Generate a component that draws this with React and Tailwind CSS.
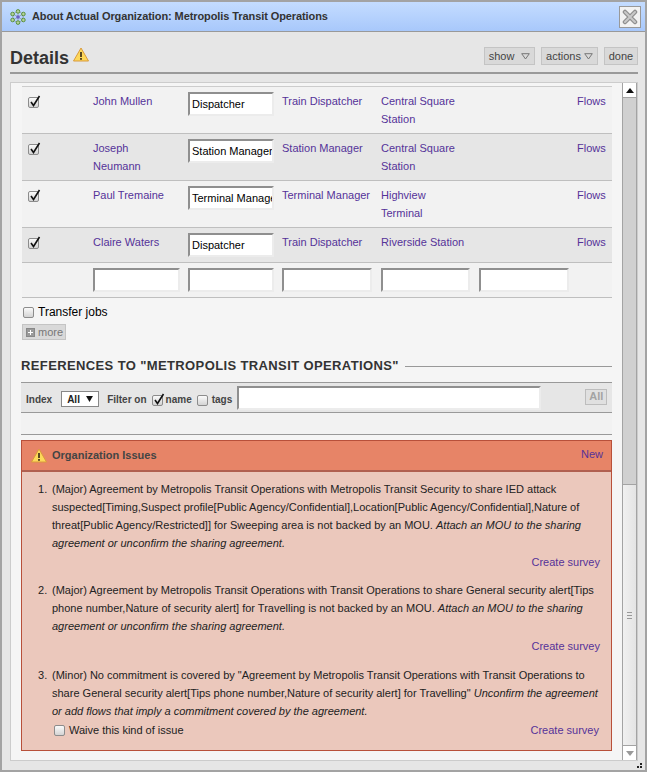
import React from "react";

const link = "text-[#553399]";

const rows = [
    { name: ["John Mullen"], job: "Dispatcher", role: "Train Dispatcher", place: ["Central Square", "Station"], h: "h-[47px]", bg: "bg-[#f2f2f2]" },
    { name: ["Joseph", "Neumann"], job: "Station Manager", role: "Station Manager", place: ["Central Square", "Station"], h: "h-[47px]", bg: "bg-[#e6e6e6]" },
    { name: ["Paul Tremaine"], job: "Terminal Manager", role: "Terminal Manager", place: ["Highview", "Terminal"], h: "h-[47px]", bg: "bg-[#f2f2f2]" },
    { name: ["Claire Waters"], job: "Dispatcher", role: "Train Dispatcher", place: ["Riverside Station"], h: "h-[35px]", bg: "bg-[#e6e6e6]" },
];

const Check = ({ checked, className = "" }) => (
    <span className={`relative inline-block w-[11px] h-[11px] shrink-0 rounded-[2px] border border-[#8c8c8c] bg-gradient-to-b from-[#fafafa] to-[#d4d4d4] ${className}`}>
        {checked && (
            <svg viewBox="0 0 14 14" className="absolute left-[-1px] top-[-4px] w-[14px] h-[14px]">
                <path d="M3 8 L5.5 11.5 L11.5 2" fill="none" stroke="#111" strokeWidth="1.6" />
            </svg>
        )}
    </span>
);

const Warn = ({ className = "" }) => (
    <svg viewBox="0 0 16 15" className={className}>
        <path d="M8 1 L15.5 14 H0.5 Z" fill="#fdd85a" stroke="#d99a3c" strokeWidth="1" strokeLinejoin="round" />
        <rect x="7.1" y="5" width="1.8" height="5" fill="#4a3a1a" />
        <rect x="7.1" y="11" width="1.8" height="1.8" fill="#4a3a1a" />
    </svg>
);

const OrgIcon = () => (
    <svg viewBox="0 0 16 16" className="w-4 h-4 shrink-0">
        <g fill="none" stroke="#8f9bb0" strokeWidth="0.8">
            <path d="M8 2 L13 5 L13 11 L8 14 L3 11 L3 5 Z" />
            <path d="M8 2 L8 14 M3 5 L13 11 M13 5 L3 11" />
        </g>
        <g fill="#b5d19a" stroke="#4f8a2f" strokeWidth="0.9">
            <circle cx="8" cy="2.4" r="1.8" />
            <circle cx="13.4" cy="5" r="1.8" />
            <circle cx="13.4" cy="11" r="1.8" />
            <circle cx="8" cy="13.6" r="1.8" />
            <circle cx="2.6" cy="11" r="1.8" />
            <circle cx="2.6" cy="5" r="1.8" />
        </g>
        <circle cx="8" cy="8" r="1.8" fill="#6b62c4" />
    </svg>
);

const Caret = () => (
    <svg viewBox="0 0 9 7" className="w-[9px] h-[7px]">
        <path d="M0.7 0.7 H8.3 L4.5 6 Z" fill="none" stroke="#777" strokeWidth="1" />
    </svg>
);

const FieldBox = ({ children, className = "" }) => (
    <div className={`h-[24px] overflow-hidden whitespace-nowrap bg-white border-2 border-t-[#8f8f8f] border-l-[#8f8f8f] border-r-[#ececec] border-b-[#ececec] pl-[2px] text-[11px] leading-[21px] text-black ${className}`}>
        {children}
    </div>
);

const Issue = ({ num, children, survey = true, surveyGap = "mt-[1px]", className = "" }) => (
    <li className={`flex ${className}`}>
        <span className="w-[30px] pl-[16px] shrink-0">{num}.</span>
        <div className="flex-1">
            <div className="w-[552px]">{children}</div>
            {survey && <div className={`${surveyGap} text-right pr-[11px] ${link}`}>Create survey</div>}
        </div>
    </li>
);

export default function App() {
    return (
        <div className="relative w-[647px] h-[772px] flex flex-col overflow-hidden bg-[#e6e6e6] border-2 border-[#a3a3a3] text-[#222] text-[11px] font-['Liberation_Sans',Arial,sans-serif]">
            {/* title bar */}
            <div className="h-[30px] shrink-0 flex items-center gap-[6px] pl-[8px] pr-[4px] bg-gradient-to-b from-[#c4dcff] to-[#a8c8fb] border-b border-[#999]">
                <OrgIcon />
                <span className="flex-1 font-bold text-[11px] tracking-[-0.09px] text-[#333]">About Actual Organization: Metropolis Transit Operations</span>
                <div className="w-[22px] h-[22px] flex items-center justify-center bg-[#f2f2f2] border border-[#999]">
                    <svg viewBox="0 0 16 16" className="w-[16px] h-[16px]">
                        <path d="M3 3 L13 13 M13 3 L3 13" stroke="#8f8f8f" strokeWidth="4.5" strokeLinecap="round" />
                        <path d="M3 3 L13 13 M13 3 L3 13" stroke="#c9c9c9" strokeWidth="2" strokeLinecap="round" />
                    </svg>
                </div>
            </div>

            {/* details header */}
            <div className="ml-[8px] mr-[7px] h-[42px] shrink-0 flex items-end pb-[1px] border-b-2 border-[#999] justify-between">
                <div className="flex items-center gap-[4px]">
                    <span className="text-[18px] leading-[26px] font-bold text-[#333]">Details</span>
                    <Warn className="w-[16px] h-[15px] mb-[8px]" />
                </div>
                <div className="flex items-center gap-[6px] mb-[6px]">
                    <div className="h-[18px] w-[51px] flex items-center justify-center gap-[7px] bg-[#d9d9d9] border border-[#c4c4c4] text-[#444]">show <Caret /></div>
                    <div className="h-[18px] w-[57px] flex items-center justify-center gap-[3px] bg-[#d9d9d9] border border-[#c4c4c4] text-[#444]">actions <Caret /></div>
                    <div className="h-[18px] w-[34px] flex items-center justify-center bg-[#d9d9d9] border border-[#c4c4c4] text-[#444]">done</div>
                </div>
            </div>

            {/* scrolling panel */}
            <div className="mt-[8px] ml-[8px] mr-[7px] h-[679px] flex bg-[#f5f5f5] border border-[#cccccc] overflow-hidden">
                <div className="w-[601px] shrink-0 pl-[11px]">
                    <div className="w-[590px] mt-[3px] border-t border-[#ccc]">
                        {rows.map((r) => (
                            <div key={r.name[0]} className={`grid grid-cols-[71px_95px_94px_99px_196px_35px] pt-[5px] leading-[18px] border-b border-[#bfbfbf] ${r.h} ${r.bg}`}>
                                <div className="pl-[6px] pt-[3px]"><Check checked className="block" /></div>
                                <div className={link}>{r.name.map((n) => <div key={n}>{n}</div>)}</div>
                                <div className="w-[86px]"><FieldBox>{r.job}</FieldBox></div>
                                <div className={link}>{r.role}</div>
                                <div className={link}>{r.place.map((n) => <div key={n}>{n}</div>)}</div>
                                <div className={link}>Flows</div>
                            </div>
                        ))}
                        <div className="h-[35px] pl-[71px] pt-[5px] flex border-b border-[#bfbfbf] bg-[#f2f2f2]">
                            <FieldBox className="w-[87px] mr-[8px]" />
                            <FieldBox className="w-[86px] mr-[8px]" />
                            <FieldBox className="w-[90px] mr-[9px]" />
                            <FieldBox className="w-[89px] mr-[9px]" />
                            <FieldBox className="w-[90px]" />
                        </div>
                    </div>

                    <div className="mt-[7px] flex items-center gap-[4px] text-[12px] text-black leading-[14px]">
                        <Check className="ml-[1px]" />
                        <span>Transfer jobs</span>
                    </div>
                    <div className="mt-[5px] w-[44px] h-[16px] flex items-center gap-[3px] pl-[3px] bg-[#d9d9d9] border border-[#c4c4c4] text-[#777]">
                        <span className="relative w-[9px] h-[9px] bg-[#9a9a9a] border border-[#888]">
                            <span className="absolute left-[1px] top-[3px] w-[5px] h-[1px] bg-white" />
                            <span className="absolute left-[3px] top-[1px] w-[1px] h-[5px] bg-white" />
                        </span>
                        more
                    </div>

                    <div className="mt-[18px] -ml-[1px] w-[591px] flex items-center gap-[6px]">
                        <span className="font-bold text-[13px] leading-[16px] tracking-[0.38px] text-[#333] whitespace-nowrap">REFERENCES TO "METROPOLIS TRANSIT OPERATIONS"</span>
                        <span className="flex-1 h-[1px] bg-[#999]" />
                    </div>

                    <div className="-ml-[1px] w-[591px] mt-[8px] h-[31px] flex items-center bg-[#e6e6e6] border-y border-[#999] text-[10px] font-bold text-[#444]">
                        <span className="ml-[5px] mt-[4px]">Index</span>
                        <div className="ml-[9px] mt-[3px] w-[38px] h-[16px] flex items-center justify-between px-[5px] bg-white border border-[#888] text-[#222]">
                            All
                            <svg viewBox="0 0 8 7" className="w-[7px] h-[6px]"><path d="M0 0 H8 L4 7 Z" fill="#111" /></svg>
                        </div>
                        <span className="ml-[8px] mt-[4px]">Filter on</span>
                        <Check checked className="ml-[5px] mt-[6px]" />
                        <span className="ml-[3px] mt-[4px]">name</span>
                        <Check className="ml-[5px] mt-[6px]" />
                        <span className="ml-[4px] mt-[4px]">tags</span>
                        <FieldBox className="ml-[5px] w-[304px]" />
                        <div className="ml-[44px] mb-[2px] w-[22px] h-[16px] flex items-center justify-center bg-[#e0e0e0] border border-[#bdbdbd] text-[#a3a3a3] text-[11px]">All</div>
                    </div>
                    <div className="-ml-[1px] w-[591px] h-[22px] bg-[#f2f2f2] border-b border-[#999]" />

                    <div className="-ml-[1px] w-[591px] mt-[5px] border border-[#b8503a] bg-[#ebc8bc]">
                        <div className="h-[31px] flex items-center justify-between pl-[9px] pr-[8px] bg-[#e78467] border-b-2 border-[#b06050]">
                            <div className="flex items-center gap-[5px] font-bold text-[11px] text-[#444]">
                                <Warn className="w-[16px] h-[15px]" />
                                Organization Issues
                            </div>
                            <span className={`${link} -mt-[3px]`}>New</span>
                        </div>
                        <ol className="pt-[8px] pb-[11px] leading-[18px] text-[#222]">
                            <Issue num={1}>
                                (Major) Agreement by Metropolis Transit Operations with Metropolis Transit Security to share IED attack suspected[Timing,Suspect profile[Public Agency/Confidential],Location[Public Agency/Confidential],Nature of threat[Public Agency/Restricted]] for Sweeping area is not backed by an MOU. <i>Attach an MOU to the sharing agreement or unconfirm the sharing agreement.</i>
                            </Issue>
                            <Issue num={2} surveyGap="mt-[2px]" className="mt-[10px]">
                                (Major) Agreement by Metropolis Transit Operations with Transit Operations to share General security alert[Tips phone number,Nature of security alert] for Travelling is not backed by an MOU. <i>Attach an MOU to the sharing agreement or unconfirm the sharing agreement.</i>
                            </Issue>
                            <Issue num={3} survey={false} className="mt-[11px]">
                                (Minor) No commitment is covered by "Agreement by Metropolis Transit Operations with Transit Operations to share General security alert[Tips phone number,Nature of security alert] for Travelling" <i>Unconfirm the agreement or add flows that imply a commitment covered by the agreement.</i>
                                <div className="flex items-center justify-between pr-[5px] mt-[1px]">
                                    <span className="flex items-center gap-[4px] ml-[2px]"><Check />Waive this kind of issue</span>
                                    <span className={link}>Create survey</span>
                                </div>
                            </Issue>
                        </ol>
                    </div>
                </div>

                {/* scrollbar */}
                <div className="ml-[10px] w-[15px] shrink-0 flex flex-col border-x border-[#a3a3a3]">
                    <div className="h-[15px] flex items-center justify-center bg-white border-b border-[#a3a3a3]">
                        <svg viewBox="0 0 8 5" className="w-[8px] h-[5px]"><path d="M4 0 L8 5 H0 Z" fill="#111" /></svg>
                    </div>
                    <div className="h-[387px] bg-[#d0d0d0] border-b border-[#a3a3a3]" />
                    <div className="flex-1 flex items-center justify-center bg-gradient-to-r from-[#f0f0f0] to-[#e4e4e4]">
                        <div className="flex flex-col gap-[2px] w-[5px]">
                            <span className="h-[1px] bg-[#999]" />
                            <span className="h-[1px] bg-[#999]" />
                            <span className="h-[1px] bg-[#999]" />
                        </div>
                    </div>
                    <div className="h-[15px] flex items-center justify-center bg-white border-t border-[#a3a3a3]">
                        <svg viewBox="0 0 8 5" className="w-[8px] h-[5px]"><path d="M0 0 H8 L4 5 Z" fill="#999" /></svg>
                    </div>
                </div>
            </div>

            {/* resize grip */}
            <div className="absolute right-[3px] bottom-[2px] grid grid-cols-2 gap-[1px] w-[5px]">
                <span />
                <span className="w-[2px] h-[2px] bg-[#222]" />
                <span className="w-[2px] h-[2px] bg-[#222]" />
                <span className="w-[2px] h-[2px] bg-[#222]" />
            </div>
        </div>
    );
}
